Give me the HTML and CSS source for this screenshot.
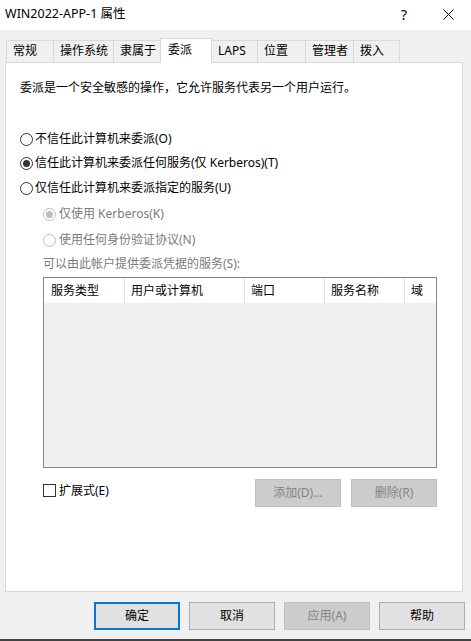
FILE: index.html
```html
<!DOCTYPE html>
<html lang="zh-CN">
<head>
<meta charset="utf-8">
<title>WIN2022-APP-1 属性</title>
<link rel="stylesheet" href="styles.css">
</head>
<body>
<div class="window">
  <div class="titlebar">
    <span class="title">WIN2022-APP-1 属性</span>
    <div class="caption">
      <span class="cap-btn help">?</span>
      <span class="cap-btn close"><svg width="11" height="11" viewBox="0 0 11 11"><path d="M0.5 0.5 L10.5 10.5 M10.5 0.5 L0.5 10.5" stroke="#000" stroke-width="1" fill="none"/></svg></span>
    </div>
  </div>
  <div class="tabs">
    <div class="tab t1">常规</div>
    <div class="tab t2">操作系统</div>
    <div class="tab t3">隶属于</div>
    <div class="tab t4 active">委派</div>
    <div class="tab t5">LAPS</div>
    <div class="tab t6">位置</div>
    <div class="tab t7">管理者</div>
    <div class="tab t8">拨入</div>
  </div>
  <div class="panel">
    <div class="intro">委派是一个安全敏感的操作，它允许服务代表另一个用户运行。</div>
    <div class="row r1"><span class="radio"></span><span class="label">不信任此计算机来委派(O)</span></div>
    <div class="row r2"><span class="radio checked"></span><span class="label">信任此计算机来委派任何服务(仅 Kerberos)(T)</span></div>
    <div class="row r3"><span class="radio"></span><span class="label">仅信任此计算机来委派指定的服务(U)</span></div>
    <div class="row sub s1"><span class="radio checked disabled"></span><span class="label dim">仅使用 Kerberos(K)</span></div>
    <div class="row sub s2"><span class="radio disabled"></span><span class="label dim">使用任何身份验证协议(N)</span></div>
    <div class="svc-label dim">可以由此帐户提供委派凭据的服务(S):</div>
    <div class="list">
      <div class="list-head">
        <div class="col c1">服务类型</div>
        <div class="col c2">用户或计算机</div>
        <div class="col c3">端口</div>
        <div class="col c4">服务名称</div>
        <div class="col c5">域</div>
      </div>
      <div class="list-body"></div>
    </div>
    <div class="bottom-row">
      <div class="check-group"><span class="checkbox"></span><span class="label">扩展式(E)</span></div>
      <div class="list-buttons">
        <button class="btn disabled">添加(D)...</button>
        <button class="btn disabled">删除(R)</button>
      </div>
    </div>
  </div>
  <div class="footer">
    <button class="btn default">确定</button>
    <button class="btn">取消</button>
    <button class="btn disabled">应用(A)</button>
    <button class="btn">帮助</button>
  </div>
</div>
</body>
</html>
```
FILE: styles.css
```css
html, body {
  margin: 0;
  padding: 0;
}
body {
  width: 471px;
  height: 641px;
  overflow: hidden;
  background: #f0f0f0;
  font-family: "Noto Sans", "Noto Sans CJK SC", sans-serif;
  font-size: 12px;
  color: #000;
}
.window {
  height: 641px;
  box-sizing: border-box;
  border-bottom: 2px solid #434343;
  display: flex;
  flex-direction: column;
}
.titlebar {
  height: 30px;
  flex: none;
  background: #fff;
  display: flex;
  align-items: center;
}
.title {
  padding-left: 5px;
  font-size: 12.5px;
  line-height: 16px;
  margin-top: -2px;
}
.caption {
  margin-left: auto;
  display: flex;
  height: 30px;
}
.cap-btn {
  display: flex;
  align-items: center;
  justify-content: center;
  height: 28px;
}
.help {
  width: 44px;
  font-size: 14px;
}
.close {
  width: 45px;
}
.tabs {
  display: flex;
  align-items: flex-end;
  height: 24px;
  margin-top: 8px;
  padding-left: 6px;
  position: relative;
  z-index: 1;
  flex: none;
}
.tab {
  height: 22px;
  box-sizing: border-box;
  border: 1px solid #d9d9d9;
  border-bottom: none;
  margin-left: -1px;
  padding-left: 6px;
  line-height: 20px;
  background: #f0f0f0;
  white-space: nowrap;
}
.t1 { width: 48px; margin-left: 0; }
.t2 { width: 61px; }
.t3 { width: 48px; }
.t4 { width: 52px; }
.t5 { width: 47px; }
.t6 { width: 49px; }
.t7 { width: 49px; }
.t8 { width: 47px; }
.tab.active {
  height: 25px;
  margin-bottom: -1px;
  background: #fff;
  padding-left: 7px;
  line-height: 21px;
  position: relative;
  z-index: 2;
}
.panel {
  flex: none;
  height: 530px;
  box-sizing: border-box;
  margin: 0 8px 0 5px;
  border: 1px solid #d9d9d9;
  background: #fff;
  padding-left: 14px;
  display: flex;
  flex-direction: column;
}
.intro {
  margin-top: 17px;
  height: 16px;
  line-height: 16px;
}
.row {
  display: flex;
  align-items: center;
  height: 16px;
  line-height: 16px;
}
.r1 { margin-top: 35px; }
.r2 { margin-top: 8px; }
.r3 { margin-top: 9px; }
.sub { margin-left: 23px; }
.s1 { margin-top: 10px; }
.s2 { margin-top: 10px; }
.radio {
  width: 13px;
  height: 13px;
  box-sizing: border-box;
  border: 1px solid #333;
  border-radius: 50%;
  background: #fff;
  margin-right: 2px;
  display: flex;
  align-items: center;
  justify-content: center;
  flex: none;
}
.sub .radio { margin-right: 3px; }
.radio.checked::after {
  content: "";
  width: 7px;
  height: 7px;
  border-radius: 50%;
  background: #333;
}
.radio.disabled {
  border-color: #bcbcbc;
}
.radio.disabled.checked::after {
  background: #bcbcbc;
}
.dim {
  color: #7a7a7a;
}
.svc-label {
  margin-top: 8px;
  margin-left: 23px;
  height: 16px;
  line-height: 16px;
}
.list {
  margin-top: 5px;
  margin-left: 23px;
  width: 394px;
  height: 191px;
  box-sizing: border-box;
  border: 1px solid #828790;
  background: #f0f0f0;
  display: flex;
  flex-direction: column;
}
.list-head {
  height: 25px;
  display: flex;
  background: #fff;
  flex: none;
}
.col {
  box-sizing: border-box;
  height: 25px;
  line-height: 25px;
  padding-left: 6px;
  border-right: 1px solid #e5e5e5;
  white-space: nowrap;
}
.c1 { width: 81px; padding-left: 7px; }
.c2 { width: 120px; }
.c3 { width: 80px; }
.c4 { width: 80px; }
.c5 { flex: 1; border-right: none; }
.list-body {
  flex: 1;
}
.bottom-row {
  margin-top: 11px;
  margin-left: 23px;
  width: 394px;
  height: 28px;
  display: flex;
  justify-content: space-between;
}
.check-group {
  display: flex;
  align-items: center;
  margin-top: 5px;
  height: 13px;
  line-height: 13px;
}
.checkbox {
  width: 13px;
  height: 13px;
  box-sizing: border-box;
  border: 1px solid #333;
  background: #fff;
  margin-right: 3px;
  flex: none;
}
.list-buttons {
  display: flex;
  gap: 10px;
}
.btn {
  width: 86px;
  height: 28px;
  box-sizing: border-box;
  border: 1px solid #adadad;
  background: #e1e1e1;
  font: inherit;
  color: #000;
  padding: 0;
  margin: 0;
  display: flex;
  align-items: center;
  justify-content: center;
  line-height: 16px;
}
.btn.disabled {
  background: #cccccc;
  border-color: #bfbfbf;
  color: #838383;
}
.btn.default {
  border: 2px solid #0078d7;
}
.footer {
  flex: none;
  display: flex;
  justify-content: flex-end;
  gap: 9px;
  padding-right: 6px;
  margin-top: 10px;
}
```
